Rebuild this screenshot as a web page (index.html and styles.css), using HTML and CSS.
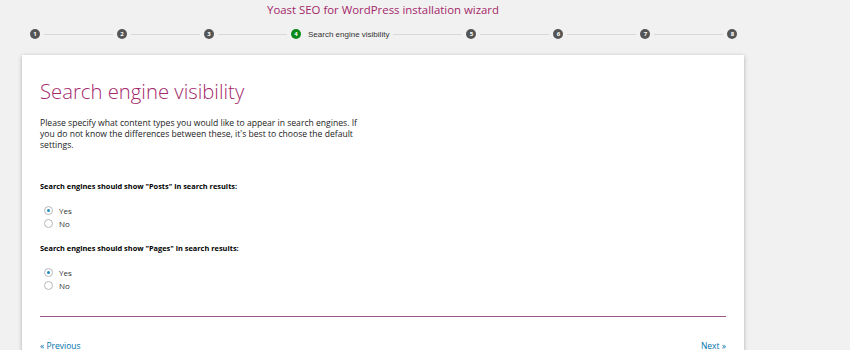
FILE: index.html
```html
<!DOCTYPE html>
<html>
<head>
<meta charset="utf-8">
<link rel="stylesheet" href="styles.css">
</head>
<body>
<h1 class="title">Yoast SEO for WordPress installation wizard</h1>
<div class="stepper">
  <span class="dot">1</span><span class="line"></span>
  <span class="dot">2</span><span class="line"></span>
  <span class="dot">3</span><span class="line"></span>
  <span class="dot active">4</span><span class="step-label">Search engine visibility</span><span class="line"></span>
  <span class="dot">5</span><span class="line"></span>
  <span class="dot">6</span><span class="line"></span>
  <span class="dot">7</span><span class="line"></span>
  <span class="dot">8</span>
</div>
<div class="card">
  <h2 class="heading">Search engine visibility</h2>
  <p class="intro">Please specify what content types you would like to appear in search engines. If you do not know the differences between these, it's best to choose the default settings.</p>
  <div class="group">
    <div class="question">Search engines should show "Posts" in search results:</div>
    <label class="option"><span class="radio checked"></span>Yes</label>
    <label class="option"><span class="radio"></span>No</label>
  </div>
  <div class="group">
    <div class="question">Search engines should show "Pages" in search results:</div>
    <label class="option"><span class="radio checked"></span>Yes</label>
    <label class="option"><span class="radio"></span>No</label>
  </div>
  <hr class="divider">
  <div class="nav">
    <a class="link">« Previous</a>
    <a class="link">Next »</a>
  </div>
</div>
</body>
</html>
```
FILE: styles.css
```css
html, body {
  margin: 0;
  padding: 0;
  background: #f1f1f1;
  font-family: "Open Sans", "Noto Sans", sans-serif;
}
.title {
  margin: 0;
  padding-top: 1px;
  height: 20px;
  font-size: 11.4px;
  font-weight: 400;
  color: #a4286a;
  text-align: center;
  line-height: 18px;
  padding-right: 84px;
}
.stepper {
  display: flex;
  align-items: center;
  gap: 4px;
  padding-left: 30px;
  height: 26px;
}
.dot {
  width: 10px;
  height: 10px;
  border-radius: 50%;
  background: #555;
  color: #fff;
  font-size: 6px;
  font-weight: 700;
  line-height: 10px;
  text-align: center;
  flex: none;
}
.dot.active {
  background: #0a8a1d;
}
.step-label {
  font-family: "Liberation Sans", Arial, sans-serif;
  font-size: 8px;
  color: #333;
  margin-left: 3px;
}
.line {
  width: 69px;
  height: 1px;
  background: #d8d8d8;
  flex: none;
}
.card {
  margin: 8px 0 0 22px;
  width: 722px;
  background: #fff;
  box-shadow: 0 1px 4px rgba(0,0,0,0.28);
  padding: 18px 18px 0;
  box-sizing: border-box;
  height: 300px;
}
.heading {
  margin: 0;
  font-size: 20.3px;
  font-weight: 300;
  color: #a4286a;
  line-height: 36px;
}
.intro {
  margin: 9px 0 0;
  width: 330px;
  font-size: 8.6px;
  line-height: 11px;
  color: #222;
}
.group {
  margin-top: 30px;
}
.group + .group {
  margin-top: 13px;
}
.question {
  font-size: 7.4px;
  font-weight: 700;
  color: #000;
  line-height: 11px;
  margin-bottom: 12px;
}
.option {
  display: flex;
  align-items: center;
  gap: 6px;
  height: 13px;
  padding-left: 4px;
  font-size: 8px;
  color: #333;
}
.radio {
  width: 7px;
  height: 7px;
  border: 1px solid #b4b9be;
  border-radius: 50%;
  position: relative;
  flex: none;
}
.radio.checked::after {
  content: "";
  position: absolute;
  left: 2px;
  top: 2px;
  width: 3px;
  height: 3px;
  border-radius: 50%;
  background: #1e8cbe;
}
.divider {
  border: 0;
  height: 1px;
  background: #96588a;
  margin: 24px 0 0;
}
.nav {
  display: flex;
  justify-content: space-between;
  margin-top: 23px;
}
.link {
  font-size: 8.5px;
  color: #0073aa;
  text-decoration: none;
}
```
